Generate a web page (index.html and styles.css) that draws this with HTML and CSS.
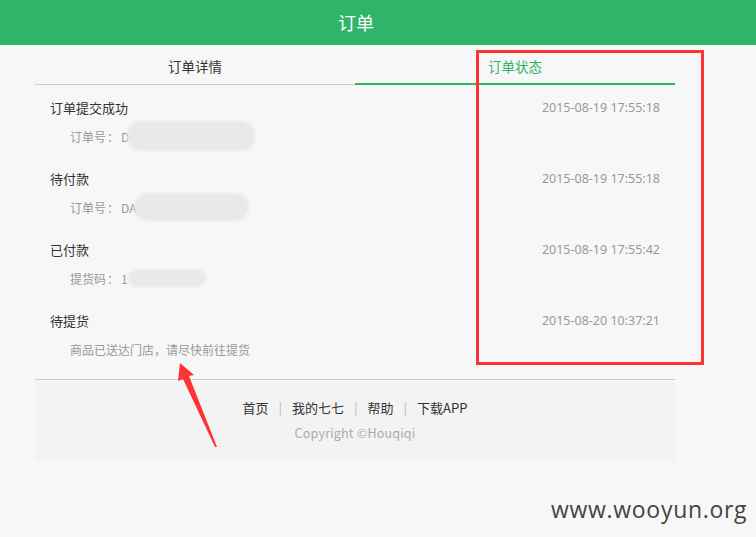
FILE: index.html
```html
<!DOCTYPE html>
<html lang="zh-CN">
<head>
<meta charset="utf-8">
<title>订单</title>
<link rel="stylesheet" href="styles.css">
</head>
<body>
<header class="topbar">订单</header>
<main class="wrap">
  <nav class="tabs">
    <div class="tab">订单详情</div>
    <div class="tab active">订单状态</div>
  </nav>
  <ul class="steps">
    <li class="step">
      <div class="row"><span class="title">订单提交成功</span><span class="time">2015-08-19 17:55:18</span></div>
      <div class="sub">订单号<span class="colon">：</span>D<span class="blur b1"></span></div>
    </li>
    <li class="step">
      <div class="row"><span class="title">待付款</span><span class="time">2015-08-19 17:55:18</span></div>
      <div class="sub">订单号<span class="colon">：</span>DA<span class="blur b2"></span></div>
    </li>
    <li class="step">
      <div class="row"><span class="title">已付款</span><span class="time">2015-08-19 17:55:42</span></div>
      <div class="sub">提货码<span class="colon">：</span>1<span class="blur b3"></span></div>
    </li>
    <li class="step">
      <div class="row"><span class="title">待提货</span><span class="time">2015-08-20 10:37:21</span></div>
      <div class="sub">商品已送达门店，请尽快前往提货</div>
    </li>
  </ul>
  <footer class="foot">
    <div class="links"><a>首页</a><i>|</i><a>我的七七</a><i>|</i><a>帮助</a><i>|</i><a>下载APP</a></div>
    <div class="copy">Copyright ©Houqiqi</div>
  </footer>
</main>
<div class="redbox"></div>
<svg class="arrow" width="60" height="100" viewBox="0 0 60 100">
  <polygon points="14,0 28,12 23,13 51,84 49,84 17,16 12,18" fill="#ff3333"/>
</svg>
<div class="mark">www.wooyun.org</div>
</body>
</html>
```
FILE: styles.css
```css
* { box-sizing: border-box; margin: 0; padding: 0; }
body {
  background: #f7f7f7;
  font-family: "Microsoft YaHei", "Noto Sans CJK SC", "Noto Sans", sans-serif;
  width: 756px;
  height: 537px;
  overflow: hidden;
  position: relative;
}
.topbar {
  height: 45px;
  background: #2fb469;
  color: #fff;
  font-size: 18px;
  line-height: 45px;
  text-align: center;
  padding-right: 44px;
}
.wrap {
  width: 640px;
  margin-left: 35px;
}
.tabs {
  display: flex;
  height: 40px;
  border-bottom: 1px solid #cccccc;
}
.tab {
  flex: 1 1 0;
  text-align: center;
  font-size: 13.5px;
  line-height: 42px;
  color: #333;
}
.tab.active {
  color: #2fb469;
  border-bottom: 2px solid #2fb469;
  margin-bottom: -1px;
}
.steps { list-style: none; padding: 0 15px; }
.step { height: 71px; padding-top: 13px; }
.row {
  display: flex;
  justify-content: space-between;
  align-items: center;
  height: 18px;
}
.title { font-size: 13px; color: #333; }
.time { font-size: 12.5px; color: #999; font-family: "Microsoft YaHei", "Noto Sans", sans-serif; }
.sub {
  font-size: 12px;
  color: #999;
  margin-top: 11px;
  padding-left: 20px;
  height: 18px;
  display: flex;
  align-items: center;
}
.colon { display: inline-block; width: 14px; text-align: center; margin-right: 1px; }
.blur {
  display: inline-block;
  background: #e9e9e9;
  border-radius: 14px;
  filter: blur(1.5px);
}
.b1 { width: 128px; height: 30px; margin-left: -2px; }
.b2 { width: 115px; height: 28px; margin-left: -2px; }
.b3 { width: 78px; height: 18px; }
.foot {
  margin-top: 10px;
  border-top: 1px solid #cccccc;
  background: #f3f3f3;
  height: 82px;
  text-align: center;
  padding-top: 18px;
}
.links { font-size: 13px; color: #333; line-height: 20px; }
.links i { font-style: normal; color: #a8bcd4; margin: 0 10px; }
.copy { font-size: 12.5px; color: #aaa; margin-top: 6px; line-height: 18px; letter-spacing: 0.2px; }
.redbox {
  position: absolute;
  left: 476px;
  top: 50px;
  width: 228px;
  height: 315px;
  border: 3px solid #ff3333;
}
.arrow {
  position: absolute;
  left: 166px;
  top: 363px;
}
.mark {
  position: absolute;
  left: 551px;
  top: 493px;
  font-family: "Open Sans", "Noto Sans", sans-serif;
  font-size: 23px;
  color: #444;
  letter-spacing: 0.7px;
}
```
